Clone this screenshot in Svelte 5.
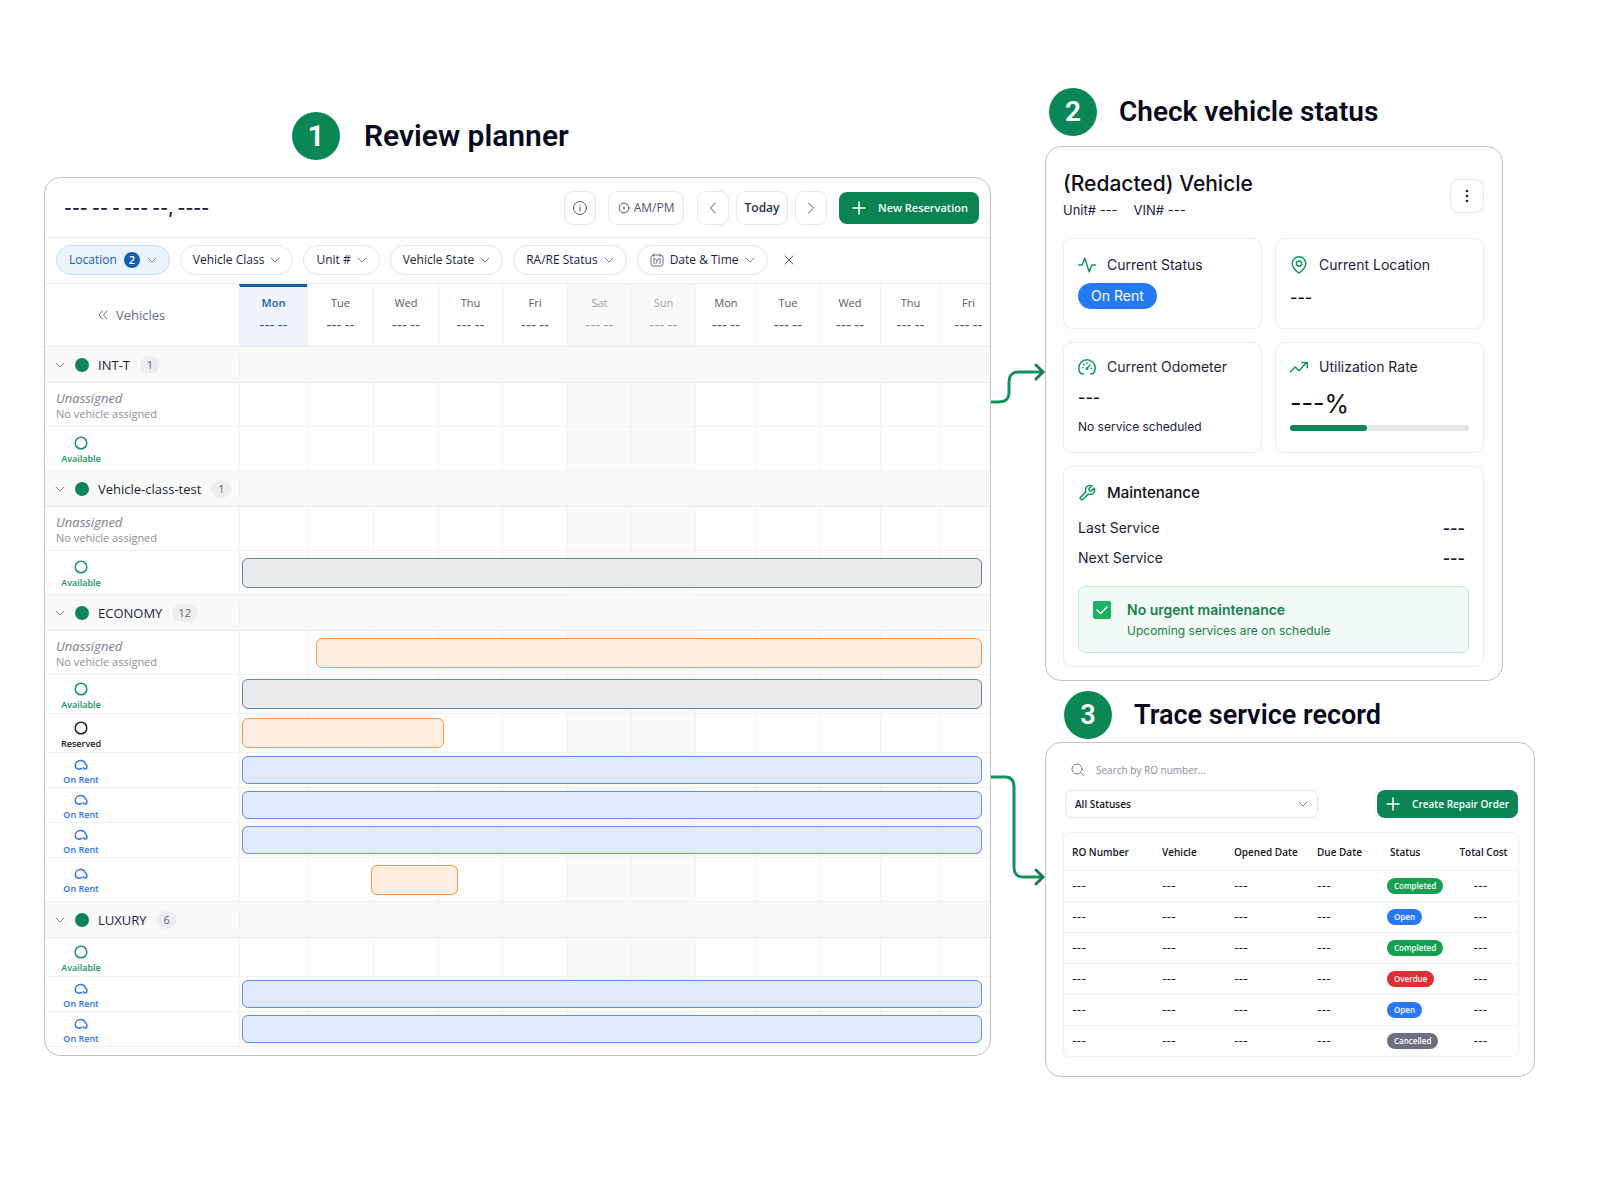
<script lang="ts">
  type Bar = { start: number; end: number; tone: string };
  type Row = { kind: string; size: string; bar?: Bar };

  const days = [
    { name: 'Mon', today: true },
    { name: 'Tue' },
    { name: 'Wed' },
    { name: 'Thu' },
    { name: 'Fri' },
    { name: 'Sat', weekend: true },
    { name: 'Sun', weekend: true },
    { name: 'Mon' },
    { name: 'Tue' },
    { name: 'Wed' },
    { name: 'Thu' },
    { name: 'Fri' }
  ];

  // bar start / end are percentages of the timeline width
  const full = (tone: string): Bar => ({ start: 0.4, end: 99, tone });

  let groups = $state([
    {
      name: 'INT-T',
      count: 1,
      open: true,
      rows: [
        { kind: 'Unassigned', size: 'tall' },
        { kind: 'Available', size: 'tall' }
      ] as Row[]
    },
    {
      name: 'Vehicle-class-test',
      count: 1,
      open: true,
      rows: [
        { kind: 'Unassigned', size: 'tall' },
        { kind: 'Available', size: 'tall', bar: full('grey') }
      ] as Row[]
    },
    {
      name: 'ECONOMY',
      count: 12,
      open: true,
      rows: [
        { kind: 'Unassigned', size: 'tall', bar: { start: 10.2, end: 99, tone: 'orange' } },
        { kind: 'Available', size: 'mid', bar: full('grey') },
        { kind: 'Reserved', size: 'mid', bar: { start: 0.4, end: 27.3, tone: 'orange' } },
        { kind: 'On Rent', size: 'low', bar: full('blue') },
        { kind: 'On Rent', size: 'low', bar: full('blue') },
        { kind: 'On Rent', size: 'low', bar: full('blue') },
        { kind: 'On Rent', size: 'tall', bar: { start: 17.6, end: 29.1, tone: 'orange' } }
      ] as Row[]
    },
    {
      name: 'LUXURY',
      count: 6,
      open: true,
      rows: [
        { kind: 'Available', size: 'mid' },
        { kind: 'On Rent', size: 'low', bar: full('blue') },
        { kind: 'On Rent', size: 'low', bar: full('blue') }
      ] as Row[]
    }
  ]);

  const filters = ['Vehicle Class', 'Unit #', 'Vehicle State', 'RA/RE Status'];

  const columns = ['RO Number', 'Vehicle', 'Opened Date', 'Due Date', 'Status', 'Total Cost'];
  const orders = ['Completed', 'Open', 'Completed', 'Overdue', 'Open', 'Cancelled'];

  const utilization = 43;
  let search = $state('');
</script>

{#snippet chevron()}
  <svg class="chevron" viewBox="0 0 10 6" width="10" height="6"><path d="M1 1l4 4 4-4" /></svg>
{/snippet}

{#snippet plus()}
  <svg class="plus" viewBox="0 0 14 14" width="14" height="14"><path d="M7 1v12M1 7h12" /></svg>
{/snippet}

<main>
  <section class="planner-side">
    <h2 class="step first"><span class="num">1</span>Review planner</h2>

    <div class="panel planner">
      <header class="toolbar">
        <h3>--- -- - --- --, ----</h3>
        <button class="tool square" aria-label="Info">
          <svg viewBox="0 0 16 16" width="16" height="16">
            <circle cx="8" cy="8" r="6.5" /><path d="M8 7.3v3.6M8 4.8v.3" />
          </svg>
        </button>
        <button class="tool ampm">
          <svg viewBox="0 0 12 12" width="12" height="12">
            <circle cx="6" cy="6" r="5" /><circle class="dot" cx="6" cy="6" r="1" />
          </svg>
          AM/PM
        </button>
        <div class="nav">
          <button class="tool square" aria-label="Previous">
            <svg viewBox="0 0 8 12" width="8" height="12"><path d="M6.500 1l-5 5 5 5" /></svg>
          </button>
          <button class="tool today">Today</button>
          <button class="tool square" aria-label="Next">
            <svg viewBox="0 0 8 12" width="8" height="12"><path d="M1.500 1l5 5-5 5" /></svg>
          </button>
        </div>
        <button class="primary">{@render plus()}New Reservation</button>
      </header>

      <div class="filters">
        <button class="chip active">Location <span class="badge">2</span>{@render chevron()}</button>
        {#each filters as filter}
          <button class="chip">{filter}{@render chevron()}</button>
        {/each}
        <button class="chip">
          <svg class="cal" viewBox="0 0 14 14" width="14" height="14">
            <rect x="1" y="2" width="12" height="11" rx="2.500" />
            <path d="M4 .8v2.700M10 .8v2.700M4 5.500v5M10 5.500v5M4.500 5.500L7 7.500l2.500-2M7 7.500v1.500L5.800 10.500" />
          </svg>
          Date &amp; Time{@render chevron()}
        </button>
        <button class="clear" aria-label="Clear filters">
          <svg viewBox="0 0 10 10" width="10" height="10"><path d="M1 1l8 8M9 1l-8 8" /></svg>
        </button>
      </div>

      <div class="line days">
        <div class="corner">
          <svg viewBox="0 0 10 10" width="10" height="10"><path d="M4.500 1L1 5l3.500 4M9 1L5.500 5 9 9" /></svg>
          Vehicles
        </div>
        <div class="track">
          {#each days as day}
            <div class="day" class:now={day.today} class:weekend={day.weekend}>
              <span>{day.name}</span>
              <span class="date">--- --</span>
            </div>
          {/each}
        </div>
      </div>

      {#each groups as group}
        <button class="group" onclick={() => (group.open = !group.open)}>
          <span class="group-label">
            {@render chevron()}
            <i class="disc"></i>
            {group.name}
            <span class="count">{group.count}</span>
          </span>
        </button>
        {#if group.open}
          {#each group.rows as row}
            <div class="line {row.size}">
              {#if row.kind === 'Unassigned'}
                <div class="label">
                  <em>Unassigned</em>
                  <small>No vehicle assigned</small>
                </div>
              {:else}
                <div class="label state {row.kind.replace(' ', '').toLowerCase()}">
                  {#if row.kind === 'On Rent'}
                    <svg viewBox="0 0 14 12" width="14" height="12">
                      <path d="M7.600 9.600C6.800 9 6.300 9.700 5.700 10.200 4.800 10.400 4.400 9.800 3.400 9.700 2 9.300 1.300 8.200 1.300 6.700 1.300 3.600 3.600 1.500 6.600 1.500c2.500 0 4.200 1.300 4.700 3.400 1 .5 1.600 1.500 1.600 2.700 0 1.500-.6 2.500-1.500 2.500-1 0-1.600-.4-1.900-1.400" />
                    </svg>
                  {:else}
                    <svg viewBox="0 0 14 14" width="14" height="14"><circle cx="7" cy="7" r="5.800" /></svg>
                  {/if}
                  <span>{row.kind}</span>
                </div>
              {/if}
              <div class="track">
                {#each days as day}
                  <div class="cell" class:weekend={day.weekend}></div>
                {/each}
              </div>
              {#if row.bar}
                <div
                  class="bar {row.bar.tone}"
                  style="margin-left: {row.bar.start}%; width: {row.bar.end - row.bar.start}%"
                ></div>
              {/if}
            </div>
          {/each}
        {/if}
      {/each}
    </div>
  </section>

  <div class="links">
    <svg viewBox="0 0 54 530" width="54" height="530">
      <path d="M0 42h7c8 0 11-3 11-10v-9c0-8 3-11 10-11h24" />
      <path class="head" d="M45 5l7 7-7 7" />
      <path d="M0 417h14c7 0 9 4 9 10v80c0 6 3 10 9 10h20" />
      <path class="head" d="M45 510l7 7-7 7" />
    </svg>
  </div>

  <div class="detail-side">
    <section>
      <h2 class="step second"><span class="num">2</span>Check vehicle status</h2>

      <div class="panel vehicle">
        <header>
          <div>
            <h3>(Redacted) Vehicle</h3>
            <p><span>Unit# ---</span><span>VIN# ---</span></p>
          </div>
          <button class="tool kebab" aria-label="More actions">
            <svg viewBox="0 0 4 16" width="4" height="16">
              <circle cx="2" cy="3" r="1.300" /><circle cx="2" cy="8" r="1.300" /><circle cx="2" cy="13" r="1.300" />
            </svg>
          </button>
        </header>

        <div class="cards">
          <article class="card">
            <h4>
              <svg viewBox="0 0 24 24" width="18" height="20"><path d="M1 12h4.500L9 3l6 18 3.500-9H23" /></svg>
              Current Status
            </h4>
            <span class="rent">On Rent</span>
          </article>
          <article class="card">
            <h4>
              <svg viewBox="0 0 24 24" width="18" height="20">
                <path d="M21 10c0 6-9 13-9 13s-9-7-9-13a9 9 0 0118 0z" /><circle cx="12" cy="10" r="3.500" />
              </svg>
              Current Location
            </h4>
            <p class="value">---</p>
          </article>
          <article class="card lower">
            <h4>
              <svg viewBox="0 0 24 24" width="18" height="20">
                <path d="M7 21H4A11 11 0 1120 21H17M12 14l4-4.500M6 13h.5M8 8.500l.4.4M12 6.800v.4M17.500 13.500h.5" /><circle cx="12" cy="14" r="1" />
              </svg>
              Current Odometer
            </h4>
            <p class="value">---</p>
            <p class="note">No service scheduled</p>
          </article>
          <article class="card lower">
            <h4>
              <svg viewBox="0 0 24 24" width="18" height="20"><path d="M0 19l7-7 5 5 10-11M16 6h7v7" /></svg>
              Utilization Rate
            </h4>
            <p class="percent">---%</p>
            <div class="meter"><div style="width: {utilization}%"></div></div>
          </article>
        </div>

        <article class="card maintenance">
          <h4>
            <svg viewBox="0 0 24 24" width="18" height="20">
              <path d="M14.700 6.300a1 1 0 000 1.400l1.600 1.600a1 1 0 001.400 0l3.770-3.770a6 6 0 01-7.940 7.940l-6.910 6.910a2.120 2.120 0 01-3-3l6.910-6.910a6 6 0 017.940-7.940l-3.760 3.760z" />
            </svg>
            Maintenance
          </h4>
          <dl>
            <div><dt>Last Service</dt><dd>---</dd></div>
            <div><dt>Next Service</dt><dd>---</dd></div>
          </dl>
          <div class="notice">
            <svg viewBox="0 0 18 18" width="18" height="18">
              <rect width="18" height="18" rx="2" /><path d="M4 9l3.500 3.500L14 6" />
            </svg>
            <div>
              <strong>No urgent maintenance</strong>
              <p>Upcoming services are on schedule</p>
            </div>
          </div>
        </article>
      </div>
    </section>

    <section>
      <h2 class="step third"><span class="num">3</span>Trace service record</h2>

      <div class="panel records">
        <label class="search">
          <svg viewBox="0 0 14 14" width="14" height="14"><circle cx="6" cy="6" r="5" /><path d="M9.700 9.700L13 13" /></svg>
          <input type="text" placeholder="Search by RO number..." aria-label="Search by RO number" bind:value={search} />
        </label>

        <div class="actions">
          <div class="select">
            <select aria-label="Status">
              <option>All Statuses</option>
              <option>Open</option>
              <option>Completed</option>
              <option>Overdue</option>
              <option>Cancelled</option>
            </select>
            {@render chevron()}
          </div>
          <button class="primary small">{@render plus()}Create Repair Order</button>
        </div>

        <div class="table-box">
          <table>
            <thead>
              <tr>
                {#each columns as column}
                  <th>{column}</th>
                {/each}
              </tr>
            </thead>
            <tbody>
              {#each orders as status}
                <tr>
                  <td>---</td>
                  <td>---</td>
                  <td>---</td>
                  <td>---</td>
                  <td><span class="pill {status.toLowerCase()}">{status}</span></td>
                  <td>---</td>
                </tr>
              {/each}
            </tbody>
          </table>
        </div>
      </div>
    </section>
  </div>
</main>

<style>
  :global(body) {
    margin: 0;
    background: #fff;
  }

  main {
    display: grid;
    grid-template-columns: 947fr 54px 490fr;
    align-items: start;
    padding: 0 65px 80px 44px;
    font-family: 'Open Sans', 'Noto Sans', sans-serif;
    color: #1c1d3a;
  }

  h2, h3, h4, p, dl, dd {
    margin: 0;
  }

  button, input, select {
    font: inherit;
    color: inherit;
  }

  button {
    cursor: pointer;
  }

  svg {
    flex: none;
    fill: none;
    stroke: currentColor;
    stroke-linecap: round;
    stroke-linejoin: round;
  }

  /* step headings */
  .step {
    display: flex;
    align-items: center;
    gap: 22px;
    font-family: Roboto, Inter, sans-serif;
    font-size: 28px;
    font-weight: 600;
    line-height: 48px;
    color: #070a1c;
  }

  .num {
    width: 48px;
    height: 48px;
    border-radius: 50%;
    background: #0b8756;
    color: #fff;
    text-align: center;
  }

  .first {
    gap: 24px;
    padding: 112px 0 17px 248px;
    font-size: 30px;
  }

  .second {
    padding: 88px 0 10px 4px;
  }

  .third {
    padding: 10px 0 3px 19px;
    font-size: 27px;
  }

  .panel {
    box-sizing: border-box;
    border: 1px solid #c3c5c8;
    border-radius: 16px;
    background: #fdfdfd;
    overflow: hidden;
  }

  /* planner */
  .planner {
    padding-bottom: 8px;
  }

  .toolbar {
    display: flex;
    align-items: center;
    height: 59px;
    padding: 0 11px 0 19px;
    border-bottom: 1px solid #eceef0;
  }

  .toolbar h3 {
    flex: 1;
    font-family: Inter, sans-serif;
    font-size: 17px;
    font-weight: 600;
  }

  .tool {
    display: flex;
    align-items: center;
    justify-content: center;
    box-sizing: border-box;
    height: 34px;
    padding: 0;
    border: 1px solid #e6e9ec;
    border-radius: 9px;
    background: #fefefe;
    font-size: 12px;
    color: #50526b;
  }

  .square {
    width: 32px;
  }

  .ampm {
    gap: 4px;
    width: 76px;
    margin: 0 13px 0 12px;
    font-weight: 500;
  }

  .dot {
    fill: currentColor;
    stroke: none;
  }

  .nav {
    display: flex;
    gap: 7px;
  }

  .today {
    width: 52px;
    font-weight: 600;
    color: #2d2e52;
  }

  .primary {
    display: flex;
    align-items: center;
    gap: 12px;
    height: 32px;
    margin-left: 12px;
    padding: 0 11px 0 13px;
    border: 0;
    border-radius: 8px;
    background: #0b8454;
    font-size: 11px;
    font-weight: 600;
    color: #fff;
    white-space: nowrap;
  }

  .plus {
    stroke-width: 1.5;
  }

  .filters {
    display: flex;
    align-items: center;
    gap: 10px;
    box-sizing: border-box;
    height: 46px;
    padding: 0 0 2px 11px;
    border-bottom: 1px solid #eceef0;
  }

  .chip {
    display: flex;
    align-items: center;
    gap: 6px;
    height: 30px;
    padding: 0 12px;
    border: 1px solid #e2e5e8;
    border-radius: 15px;
    background: #fefefe;
    font-size: 12px;
    font-weight: 500;
    white-space: nowrap;
  }

  .active {
    gap: 7px;
    border-color: #c8dcf2;
    background: #eaf2fc;
    color: #1a5fb0;
  }

  .badge {
    width: 16px;
    height: 16px;
    border-radius: 50%;
    background: #1560ad;
    font-size: 11px;
    font-weight: 600;
    line-height: 16px;
    text-align: center;
    color: #fff;
  }

  .chevron {
    color: #7d8196;
  }

  .cal {
    color: #6c6e84;
  }

  .clear {
    display: flex;
    padding: 6px;
    border: 0;
    background: none;
    color: #5c5e75;
  }

  .line {
    display: grid;
    grid-template-columns: 194px 1fr;
    box-sizing: border-box;
    border-bottom: 1px solid #f1f2f4;
  }

  .track {
    display: grid;
    grid-template-columns: 68fr 66fr 65fr 64fr 65fr 64fr 64fr 61fr 63fr 61fr 60fr 50fr;
    grid-area: 1 / 2;
  }

  .days {
    height: 63px;
    border-bottom-color: #e9ebed;
  }

  .corner {
    display: flex;
    align-items: center;
    gap: 8px;
    padding-left: 53px;
    font-size: 13px;
    color: #6a6c80;
  }

  .day {
    display: flex;
    flex-direction: column;
    align-items: center;
    gap: 6px;
    min-width: 0;
    padding-top: 11px;
    border-left: 1px solid #f1f2f4;
    font-size: 11px;
    line-height: 16px;
    color: #56586e;
    white-space: nowrap;
  }

  .day:last-child {
    padding-left: 6px;
  }

  .date {
    font-family: Inter, sans-serif;
    font-weight: 600;
  }

  .day.weekend {
    background: #f9f9fa;
    color: #9d9fac;
  }

  .day.now {
    padding-top: 8px;
    border-top: 3px solid #1261b0;
    background: #f1f5fb;
    font-weight: 600;
    color: #1261b0;
  }

  .group {
    display: block;
    box-sizing: border-box;
    width: 100%;
    height: 36px;
    padding: 6px 0;
    border: 0;
    border-bottom: 1px solid #e9ebed;
    background: #f9f9fa;
    text-align: left;
  }

  .group-label {
    display: flex;
    align-items: center;
    box-sizing: border-box;
    width: 195px;
    height: 23px;
    padding-left: 10px;
    border-right: 1px solid #f0f1f3;
    font-size: 13px;
    font-weight: 500;
    white-space: nowrap;
  }

  .disc {
    width: 14px;
    height: 14px;
    margin: 0 9px 0 10px;
    border-radius: 50%;
    background: #0f8458;
  }

  .count {
    min-width: 8px;
    margin-left: 10px;
    padding: 0 6px;
    border-radius: 9px;
    background: #ededef;
    font-size: 11px;
    line-height: 18px;
    text-align: center;
    color: #60626f;
  }

  .tall {
    height: 44px;
  }

  .mid {
    height: 39px;
  }

  .low {
    height: 35px;
  }

  .label {
    display: flex;
    flex-direction: column;
    justify-content: center;
    padding: 3px 0 0 11px;
  }

  .label em {
    font-size: 13px;
    font-weight: 500;
    line-height: 16px;
    color: #80828f;
  }

  .label small {
    font-size: 11px;
    line-height: 16px;
    color: #8e909c;
  }

  .state {
    align-items: center;
    gap: 2px;
    width: 50px;
    padding-top: 5px;
    font-size: 9px;
    font-weight: 600;
    line-height: 14px;
  }

  .state svg {
    stroke-width: 1.5;
  }

  .available {
    color: #159560;
  }

  .reserved {
    color: #202124;
  }

  .onrent {
    color: #2f74e8;
  }

  .cell {
    border-left: 1px solid #f3f4f5;
  }

  .cell.weekend {
    background: #fafafa;
  }

  .bar {
    grid-area: 1 / 2;
    align-self: center;
    box-sizing: border-box;
    height: 30px;
    border: 1px solid;
    border-radius: 6px;
  }

  .low .bar {
    height: 28px;
  }

  .grey {
    border-color: #6f8299;
    background: #e9eaec;
  }

  .orange {
    border-color: #f49b4d;
    background: #feeee1;
  }

  .blue {
    border-color: #5e92ec;
    background: #e1eafb;
  }

  /* connectors */
  .links {
    padding-top: 360px;
  }

  .links svg {
    display: block;
    stroke: #12935c;
    stroke-width: 3;
  }

  .links .head {
    stroke: #1c7767;
  }

  /* vehicle panel */
  .vehicle {
    margin-right: 32px;
    padding: 23px 18px 13px 17px;
    font-family: Inter, sans-serif;
  }

  .vehicle header {
    display: flex;
    justify-content: space-between;
    align-items: center;
    height: 51px;
    margin-bottom: 17px;
  }

  .vehicle h3 {
    font-size: 21px;
    font-weight: 500;
    line-height: 28px;
    color: #0d0e18;
  }

  .vehicle header p {
    display: flex;
    gap: 16px;
    font-size: 13px;
    line-height: 24px;
  }

  .kebab {
    width: 34px;
    color: #1c1d3a;
  }

  .kebab circle {
    fill: currentColor;
    stroke: none;
  }

  .cards {
    display: grid;
    grid-template-columns: 199fr 209fr;
    grid-template-rows: 91px 111px;
    gap: 13px;
  }

  .card {
    box-sizing: border-box;
    padding: 16px 14px 0;
    border: 1px solid #eceef0;
    border-radius: 9px;
    background: #fefefe;
  }

  .card h4 {
    display: flex;
    align-items: center;
    gap: 11px;
    font-size: 14px;
    font-weight: 400;
    line-height: 20px;
    white-space: nowrap;
  }

  .card h4 svg {
    color: #15965f;
    stroke-width: 2;
  }

  .rent {
    display: inline-block;
    margin-top: 8px;
    padding: 0 13px;
    border-radius: 13px;
    background: #2479f5;
    font-size: 14px;
    line-height: 26px;
    color: #fff;
  }

  .value {
    padding-top: 10px;
    font-size: 16px;
    font-weight: 500;
    line-height: 24px;
    color: #0d0e18;
  }

  .lower {
    padding-top: 14px;
  }

  .lower .value {
    padding-top: 8px;
  }

  .note {
    padding-top: 9px;
    font-size: 12px;
    line-height: 18px;
  }

  .percent {
    padding-top: 11px;
    font-size: 25px;
    line-height: 32px;
    color: #0d0e18;
  }

  .meter {
    height: 6px;
    margin-top: 5px;
    border-radius: 3px;
    background: #e5e7e9;
  }

  .meter div {
    height: 6px;
    border-radius: 3px;
    background: #0d8656;
  }

  .maintenance {
    margin-top: 13px;
    padding-bottom: 13px;
  }

  .maintenance h4 {
    font-size: 15px;
    font-weight: 500;
    color: #0d0e18;
  }

  dl {
    padding-top: 10px;
    font-size: 14px;
    line-height: 30px;
  }

  dl div {
    display: flex;
    justify-content: space-between;
    padding-right: 4px;
  }

  dd {
    font-size: 16px;
    font-weight: 600;
  }

  .notice {
    display: flex;
    gap: 16px;
    box-sizing: border-box;
    height: 67px;
    margin-top: 13px;
    padding: 12px 14px;
    border: 1px solid #bfecd3;
    border-radius: 7px;
    background: #f1faf5;
    font-size: 12px;
    line-height: 20px;
    color: #1a7d4c;
  }

  .notice svg {
    margin-top: 2px;
    stroke: #fff;
    stroke-width: 1.5;
  }

  .notice rect {
    fill: #1cb164;
    stroke: none;
  }

  .notice strong {
    display: block;
    font-size: 14px;
    font-weight: 600;
    line-height: 22px;
  }

  /* service records */
  .records {
    padding: 14px 15px 19px 17px;
    color: #15161f;
  }

  .search {
    display: flex;
    align-items: center;
    gap: 11px;
    height: 26px;
    padding-left: 8px;
    color: #7a7c8a;
  }

  .search input {
    width: 200px;
    padding: 0;
    border: 0;
    outline: 0;
    background: none;
    font-size: 10px;
  }

  .search input::placeholder {
    color: #8e909c;
    opacity: 1;
  }

  .actions {
    display: flex;
    justify-content: space-between;
    padding: 7px 1px 14px 2px;
  }

  .select {
    display: flex;
    align-items: center;
    width: 253px;
  }

  .select select {
    appearance: none;
    box-sizing: border-box;
    width: 100%;
    height: 28px;
    padding: 0 9px;
    border: 1px solid #e6e8ea;
    border-radius: 7px;
    background: #fefefe;
    font-size: 10px;
    font-weight: 600;
  }

  .select .chevron {
    margin-left: -20px;
    pointer-events: none;
  }

  .small {
    height: 28px;
    margin: 0;
    padding: 0 9px;
    font-size: 10px;
  }

  .table-box {
    border: 1px solid #f0f1f2;
    border-radius: 7px;
  }

  table {
    width: 100%;
    table-layout: fixed;
    border-collapse: collapse;
  }

  th, td {
    height: 30px;
    padding: 0 0 0 9px;
    border-top: 1px solid #f0f1f2;
    font-size: 10px;
    text-align: left;
    white-space: nowrap;
  }

  td {
    font-family: Inter, sans-serif;
    font-weight: 500;
  }

  th {
    height: 37px;
    border: 0;
    font-weight: 600;
  }

  th:nth-child(1) { width: 81px; }
  th:nth-child(2) { width: 63px; }
  th:nth-child(3) { width: 74px; }
  th:nth-child(4) { width: 61px; }
  th:nth-child(5) { width: 61px; padding-left: 12px; }

  th:first-child, td:first-child {
    padding-left: 8px;
  }

  th:last-child, td:last-child {
    padding: 0 2px 0 0;
    text-align: center;
  }

  td:last-child {
    padding-right: 8px;
  }

  .pill {
    display: inline-block;
    padding: 0 7px;
    border-radius: 8px;
    font-family: 'Open Sans', sans-serif;
    font-size: 8px;
    font-weight: 600;
    line-height: 16px;
    vertical-align: middle;
    color: #fff;
  }

  .completed { background: #12a150; }
  .open { background: #2878f5; }
  .overdue { background: #e42c33; }
  .cancelled { background: #6d6f80; }
</style>
